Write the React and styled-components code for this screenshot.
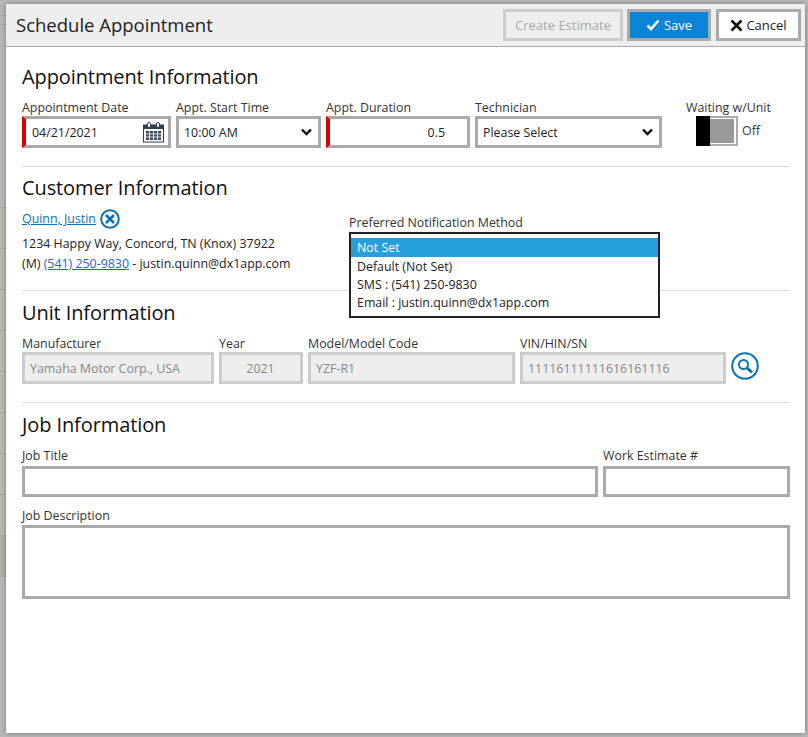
import React from "react";
import styled, { createGlobalStyle } from "styled-components";

const Global = createGlobalStyle`
  html, body { margin: 0; padding: 0; }
  body { width: 808px; height: 737px; overflow: hidden; background: #b8b8b8; font-family: "Open Sans", "Noto Sans", sans-serif; color: #222; }
  * { box-sizing: border-box; }
`;

const Backdrop = styled.div`
  width: 808px; height: 737px; padding: 4px 3px 4px 6px;
  background:
    repeating-linear-gradient(to bottom, #a8a8a4 0 1px, #bdbaa9 1px 41px) 0 207px / 6px 328px no-repeat,
    repeating-linear-gradient(to bottom, #a8a8a4 0 1px, #b1b1aa 1px 41px) 0 535px / 6px 42px no-repeat,
    linear-gradient(to bottom, #a4a4a4 0 1px, transparent 1px) 0 15px / 6px 1px no-repeat,
    linear-gradient(to bottom, #a4a4a4 0 1px, transparent 1px) 0 24px / 6px 1px no-repeat,
    #b8b8b8;
`;
const Dialog = styled.div`
  width: 799px; height: 729px; background: #fff;
  box-shadow: 0 0 5px rgba(0,0,0,.35);
  display: flex; flex-direction: column;
`;
const Header = styled.header`
  height: 43px; flex: none; background: #eee; border-bottom: 1px solid #aaa;
  display: flex; align-items: center; padding: 0 4px 1px 10px;
`;
const Title = styled.h1`
  margin: 0; flex: 1; font-size: 18.5px; font-weight: 400; color: #222;
`;
const Button = styled.button`
  height: 32px; width: ${p => p.$w}px; margin-left: ${p => p.$gap || 0}px; padding: 1px 0 0;
  display: flex; align-items: center; justify-content: center; gap: ${p => p.$iconGap || 4}px;
  font: 400 13px "Open Sans", sans-serif;
  border: 3px solid ${p => p.$variant === "disabled" ? "#ccc" : "#aaa"};
  background: ${p => p.$variant === "primary" ? "#0a84d6" : p.$variant === "disabled" ? "#eee" : "#fff"};
  color: ${p => p.$variant === "primary" ? "#fff" : p.$variant === "disabled" ? "#aaa" : "#222"};
`;
const Body = styled.main`
  flex: 1; padding: 0 15px 0 16px; display: flex; flex-direction: column;
`;
const Section = styled.section`
  position: relative; height: ${p => p.$h}px; border-bottom: ${p => p.$last ? "none" : "1px solid #ddd"};
`;
const Heading = styled.h2`
  margin: 0; padding-top: ${p => p.$top}px; font-size: 20px; font-weight: 400; line-height: 26px; color: #111; letter-spacing: -0.1px;
`;
const Row = styled.div`
  display: flex; gap: 5px; margin-top: ${p => p.$top || 0}px;
`;
const Field = styled.div`
  width: ${p => p.$w}px; flex: none; margin-left: ${p => p.$ml || 0}px;
`;
const Label = styled.div`
  font-size: 12.4px; line-height: 16px; height: ${p => p.$h || 16}px; color: #333; white-space: nowrap;
`;
const Box = styled.div`
  height: ${p => p.$h || 32}px; width: 100%;
  border: 3px solid ${p => p.$off ? "#ccc" : "#aaa"};
  background: ${p => p.$off ? "#eee" : "#fff"};
  ${p => p.$req && "border-left: 4px solid #e00000;"}
  display: flex; align-items: center; justify-content: ${p => p.$justify || "space-between"};
  padding: 0 ${p => p.$pr || 6}px 0 ${p => p.$pl || 5}px;
  font-size: 12.4px; color: ${p => p.$off ? "#888" : "#222"}; white-space: nowrap; overflow: hidden;
`;
const Toggle = styled.div`
  display: flex; align-items: flex-start; gap: 4px; margin-left: 10px;
`;
const Track = styled.div`
  width: 42px; height: 30px; border: 2px solid #aaa; background: #fff; position: relative; padding: 1px 2px 1px 12px;
  &::before { content: ""; position: absolute; left: -2px; top: -2px; width: 14px; height: 30px; background: #000; }
`;
const Thumb = styled.div`
  width: 100%; height: 100%; background: #999;
`;
const OffText = styled.span`
  font-size: 12.4px; line-height: 30px; color: #333;
`;
const CustomerLine = styled.div`
  font-size: 12.4px; line-height: 20px; color: #222; margin-top: ${p => p.$top || 0}px; display: flex; align-items: center; gap: 4px; white-space: pre;
`;
const NameLink = styled.a`
  color: #0b72b5; text-decoration: underline;
`;
const PhoneLink = styled.a`
  color: #2a63c7; text-decoration: underline;
`;
const Notification = styled.div`
  position: absolute; left: 327px; top: 48px; width: 311px; z-index: 2;
`;
const ListBox = styled.div`
  border: 2px solid #222; height: 86px; background: #fff; padding-top: 4px; margin-top: 1px;
`;
const Option = styled.div`
  height: ${p => p.$sel ? 19 : 18}px; line-height: ${p => p.$sel ? 19 : 18}px; padding-left: 6px; font-size: 12.4px;
  margin-bottom: ${p => p.$sel ? 1 : 0}px;
  background: ${p => p.$sel ? "#26a0da" : "transparent"}; color: ${p => p.$sel ? "#fff" : "#222"};
`;
const IconWrap = styled.span`
  display: inline-flex; flex: none; margin-top: ${p => p.$mt || 0}px;
`;

const CheckIcon = () => (
  <svg width="14" height="12" viewBox="0 0 14 12"><path d="M1.5 6.5 5 10l7.5-8.5" fill="none" stroke="#fff" strokeWidth="2.6" /></svg>
);
const CrossIcon = () => (
  <svg width="13" height="13" viewBox="0 0 13 13"><path d="M1.5 1.5l10 10M11.5 1.5l-10 10" fill="none" stroke="#111" strokeWidth="2.6" /></svg>
);
const Chevron = () => (
  <svg width="11" height="8" viewBox="0 0 11 8"><path d="M1 1.5 5.5 6 10 1.5" fill="none" stroke="#111" strokeWidth="2.4" /></svg>
);
const CalendarIcon = () => (
  <svg width="21" height="21" viewBox="0 0 21 21">
    <rect x="0.5" y="3" width="20" height="17" fill="#fff" stroke="#2c3e50" />
    <rect x="1" y="3" width="19" height="4" fill="#2c3e50" />
    <rect x="4.5" y="0.5" width="3" height="5" rx="1.5" fill="#fff" stroke="#2c3e50" />
    <rect x="13.5" y="0.5" width="3" height="5" rx="1.5" fill="#fff" stroke="#2c3e50" />
    <path d="M3 9h15v9H3z" fill="#3b4c5e" />
    <path d="M6.5 9v9M10.5 9v9M14.5 9v9M3 12h15M3 15h15" stroke="#fff" strokeWidth=".8" />
  </svg>
);
const CircleX = () => (
  <svg width="20" height="20" viewBox="0 0 20 20">
    <circle cx="10" cy="10" r="8.8" fill="#fff" stroke="#0b72b5" strokeWidth="2" />
    <path d="M6 6l8 8M14 6l-8 8" fill="none" stroke="#0b72b5" strokeWidth="2.6" />
  </svg>
);
const SearchIcon = () => (
  <svg width="28" height="28" viewBox="0 0 28 28">
    <circle cx="14" cy="14" r="12.8" fill="#fff" stroke="#0b72b5" strokeWidth="2" />
    <circle cx="12.5" cy="12.5" r="4.5" fill="#fff" stroke="#0b72b5" strokeWidth="2" />
    <path d="M16 16l5 4.5" stroke="#0b72b5" strokeWidth="3" />
  </svg>
);

export default function App() {
  return (
    <Backdrop>
      <Global />
      <Dialog>
        <Header>
          <Title>Schedule Appointment</Title>
          <Button $variant="disabled" $w={120}>Create Estimate</Button>
          <Button $variant="primary" $w={84} $gap={4}><CheckIcon />Save</Button>
          <Button $w={85} $gap={5} $iconGap={3}><CrossIcon />Cancel</Button>
        </Header>
        <Body>
          <Section $h={120}>
            <Heading $top={17}>Appointment Information</Heading>
            <Row $top={10}>
              <Field $w={149}>
                <Label>Appointment Date</Label>
                <Box $req $pl={6} $pr={4}><span>04/21/2021</span><CalendarIcon /></Box>
              </Field>
              <Field $w={145}>
                <Label>Appt. Start Time</Label>
                <Box><span>10:00 AM</span><Chevron /></Box>
              </Field>
              <Field $w={144}>
                <Label>Appt. Duration</Label>
                <Box $req $justify="flex-end" $pr={22}>0.5</Box>
              </Field>
              <Field $w={187}>
                <Label>Technician</Label>
                <Box><span>Please Select</span><Chevron /></Box>
              </Field>
              <Field $w={88} $ml={19}>
                <Label>Waiting w/Unit</Label>
                <Toggle><Track><Thumb /></Track><OffText>Off</OffText></Toggle>
              </Field>
            </Row>
          </Section>
          <Section $h={124}>
            <Heading $top={8}>Customer Information</Heading>
            <CustomerLine $top={8}>
              <NameLink href="#">Quinn, Justin</NameLink>
              <IconWrap><CircleX /></IconWrap>
            </CustomerLine>
            <CustomerLine $top={5}>1234 Happy Way, Concord, TN (Knox) 37922</CustomerLine>
            <CustomerLine>
              <span>(M) <PhoneLink href="#">(541) 250-9830</PhoneLink> - justin.quinn@dx1app.com</span>
            </CustomerLine>
            <Notification>
              <Label>Preferred Notification Method</Label>
              <ListBox>
                <Option $sel>Not Set</Option>
                <Option>Default (Not Set)</Option>
                <Option>SMS : (541) 250-9830</Option>
                <Option>Email : justin.quinn@dx1app.com</Option>
              </ListBox>
            </Notification>
          </Section>
          <Section $h={112}>
            <Heading $top={9}>Unit Information</Heading>
            <Row $top={10}>
              <Field $w={192}>
                <Label>Manufacturer</Label>
                <Box $off>Yamaha Motor Corp., USA</Box>
              </Field>
              <Field $w={84}>
                <Label>Year</Label>
                <Box $off $justify="center">2021</Box>
              </Field>
              <Field $w={207}>
                <Label>Model/Model Code</Label>
                <Box $off>YZF-R1</Box>
              </Field>
              <Field $w={206}>
                <Label>VIN/HIN/SN</Label>
                <Box $off>11116111111616161116</Box>
              </Field>
              <IconWrap $mt={16}><SearchIcon /></IconWrap>
            </Row>
          </Section>
          <Section $h={200} $last>
            <Heading $top={9}>Job Information</Heading>
            <Row $top={10}>
              <Field $w={576}>
                <Label $h={18}>Job Title</Label>
                <Box $h={31} />
              </Field>
              <Field $w={187}>
                <Label $h={18}>Work Estimate #</Label>
                <Box $h={31} />
              </Field>
            </Row>
            <Row $top={11}>
              <Field $w={768}>
                <Label $h={17}>Job Description</Label>
                <Box $h={74} />
              </Field>
            </Row>
          </Section>
        </Body>
      </Dialog>
    </Backdrop>
  );
}
